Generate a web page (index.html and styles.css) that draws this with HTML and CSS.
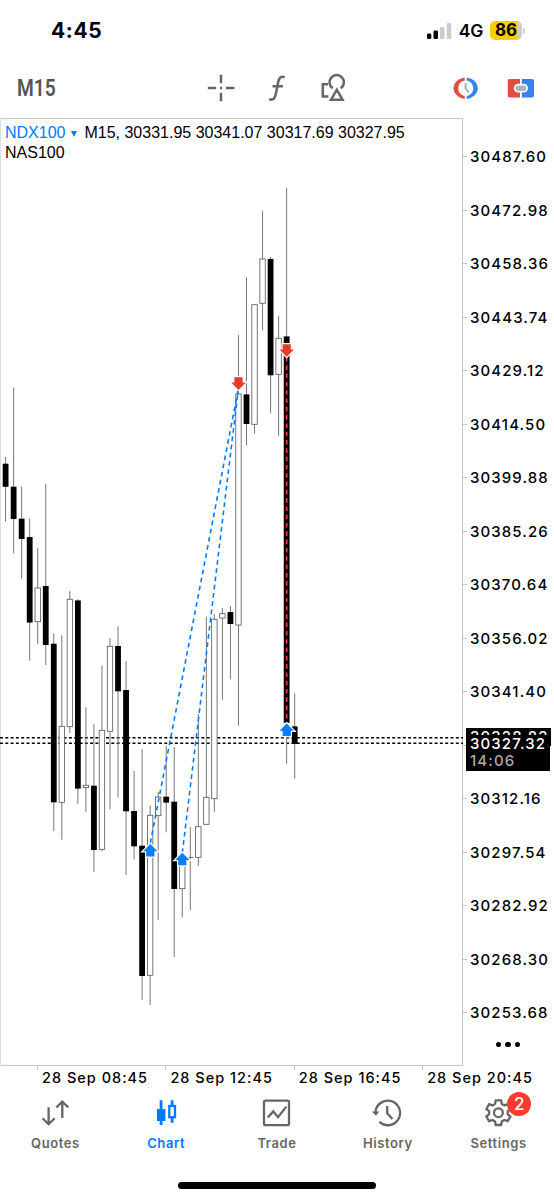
FILE: index.html
```html
<!DOCTYPE html>
<html lang="en">
	<head>
		<meta charset="UTF-8" />
		<meta name="viewport" content="width=device-width, initial-scale=1.0" />
		<title>NDX100 M15</title>
		<link rel="stylesheet" href="styles.css">
	</head>
	<body>
		<div class="app">
			<header class="status-bar">
				<span class="clock">4:45</span>
				<div class="status-icons">
					<svg class="signal" width="25" height="18" viewBox="0 0 25 18">
						<rect x="0" y="11.5" width="4.3" height="5.5" rx="1.3" />
						<rect x="6.5" y="8.5" width="4.5" height="8.5" rx="1.3" />
						<rect class="off" x="13" y="5" width="4.5" height="12" rx="1.3" />
						<rect class="off" x="19.7" y="1" width="4.5" height="16" rx="1.3" />
					</svg>
					<span class="network">4G</span>
					<span class="battery">86</span>
					<span class="battery-cap"></span>
				</div>
			</header>

			<nav class="toolbar">
				<span class="timeframe">M15</span>
				<div class="tools">
					<svg width="30" height="30" viewBox="0 0 30 30">
						<path d="M1.8 15h8.4M20 15h8.4M15 1.8v8.4M15 19.8v8.4M13.9 15h2.2" />
					</svg>
					<svg width="30" height="30" viewBox="0 0 30 30">
						<path d="M22.6 4.2C18.6 2.8 17 5 16.2 9L13.9 20.5C13 25 11.6 27.6 7.2 26.3M10.5 13.2h10.4" />
					</svg>
					<svg width="30" height="30" viewBox="0 0 30 30">
						<path d="M14.7 15.3A7.2 7.2 0 1 1 22.7 15.3M18.8 16.8L13 26.7H24.6ZM10 11.3H4.8V23.4H10.4" />
					</svg>
				</div>
				<div class="trade-tools">
					<svg width="30" height="30" viewBox="0 0 30 30">
						<path class="red" d="M13.7 4.4A13 10.9 0 0 0 13.7 26V23A8.3 8 0 0 1 13.7 7.4Z" />
						<path class="blue" d="M15.7 4.4A13 10.9 0 0 1 15.7 26V23A8.3 8 0 0 0 15.7 7.4Z" />
						<path class="hands" d="M14.6 10V15.7L18 19.6" />
					</svg>
					<svg width="30" height="30" viewBox="0 0 30 30">
						<path class="red" d="M3.7 6H14V24.5H3.7A2 2 0 0 1 1.7 22.5V8A2 2 0 0 1 3.7 6Z" />
						<path class="blue" d="M15.8 6H26A2 2 0 0 1 28 8V22.5A2 2 0 0 1 26 24.5H15.8Z" />
						<rect class="pill" x="8.6" y="11.6" width="12.6" height="7.2" rx="3.6" />
					</svg>
				</div>
			</nav>

			<main class="chart">
				<div class="plot">
					<svg class="candles" id="candles" width="463" height="948" viewBox="0 118 463 948"></svg>
					<div class="quote-info">
						<p><span class="symbol">NDX100 <i class="caret"></i></span> <span class="ohlc">M15, 30331.95 30341.07 30317.69 30327.95</span></p>
						<p>NAS100</p>
					</div>
				</div>
				<div class="price-axis">
					<span>30487.60</span>
					<span>30472.98</span>
					<span>30458.36</span>
					<span>30443.74</span>
					<span>30429.12</span>
					<span>30414.50</span>
					<span>30399.88</span>
					<span>30385.26</span>
					<span>30370.64</span>
					<span>30356.02</span>
					<span>30341.40</span>
					<span></span>
					<span>30312.16</span>
					<span>30297.54</span>
					<span>30282.92</span>
					<span>30268.30</span>
					<span>30253.68</span>
					<div class="price-tag ask">30328.82</div>
					<div class="price-tag bid">30327.32<small>14:06</small></div>
					<div class="more"><i></i><i></i><i></i></div>
				</div>
			</main>

			<div class="time-axis">
				<span>28 Sep 08:45</span>
				<span>28 Sep 12:45</span>
				<span>28 Sep 16:45</span>
				<span>28 Sep 20:45</span>
			</div>

			<nav class="tab-bar">
				<a class="tab">
					<svg width="30" height="30" viewBox="0 0 30 30">
						<path d="M8.6 9.3V26M2.6 20.3L8.6 26.2L14.6 20.3M22.3 20V3.6M16.3 9.5L22.3 3.6L28.3 9.5" />
					</svg>
					Quotes
				</a>
				<a class="tab active">
					<svg width="30" height="30" viewBox="0 0 30 30">
						<path d="M10.1 2.3V27M21.1 2.3V7M21.1 20V24.7" stroke-width="2.8" />
						<rect class="solid" x="6" y="11" width="8.4" height="12" />
						<rect x="18.3" y="8" width="5.7" height="11.2" />
					</svg>
					Chart
				</a>
				<a class="tab">
					<svg width="30" height="30" viewBox="0 0 30 30">
						<rect x="2" y="2.6" width="25" height="24.6" rx="1.5" />
						<path d="M5.8 19.6L11.3 13.4L16 19.2L24.3 8.6" />
					</svg>
					Trade
				</a>
				<a class="tab">
					<svg width="30" height="30" viewBox="0 0 30 30">
						<path d="M2.5 15.5A12.3 12.3 0 1 1 6.4 23.9M14.2 8V15.4L19.4 21" />
						<path class="solid" d="M-1.2 13.5H6.2L3 17.7Z" />
					</svg>
					History
				</a>
				<a class="tab">
					<svg width="30" height="30" viewBox="-14.4 -14.7 30 30">
						<path d="M-3.4 -8.8L-2.7 -12.3H2.7L3.4 -8.8L5.9 -7.3L9.3 -8.5L12 -3.8L9.3 -1.5V1.5L12 3.8L9.3 8.5L5.9 7.3L3.4 8.8L2.7 12.3H-2.7L-3.4 8.8L-5.9 7.3L-9.3 8.5L-12 3.8L-9.3 1.5V-1.5L-12 -3.8L-9.3 -8.5L-5.9 -7.3Z" />
						<circle cx="0" cy="0" r="4.4" />
					</svg>
					Settings
					<b class="badge">2</b>
				</a>
			</nav>
			<div class="home-indicator"></div>
		</div>

		<script>
			// [high, body top, body bottom, low, 1 = bearish]
			const candles = [
				[457, 464, 486.5, 521.7, 1],
				[387.5, 487, 518.7, 553.3, 1],
				[486.7, 519, 538.7, 578.7, 1],
				[518.3, 537.3, 622.3, 660.7, 1],
				[548, 588, 621.7, 644.3, 0],
				[483.7, 586.3, 644.7, 665, 1],
				[633.3, 644, 802, 831.3, 1],
				[635.3, 726.3, 802.3, 839.7, 0],
				[591, 599.3, 726.7, 733, 0],
				[599.3, 600.7, 788.3, 804, 1],
				[707.3, 785.3, 787.7, 812, 0],
				[724, 786, 849.7, 872, 1],
				[665.7, 730.3, 849.3, 851.3, 0],
				[638, 646.3, 731.3, 809.3, 0],
				[626.3, 646.3, 691, 797.3, 1],
				[661, 690.3, 811, 875, 1],
				[771, 811.3, 846, 859.3, 1],
				[749, 846, 975.7, 1000, 1],
				[805.7, 815.3, 975.3, 1005, 0],
				[792, 797, 815.7, 920.3, 0],
				[745.7, 797, 802.3, 832.3, 1],
				[747, 802, 888.7, 957, 1],
				[850, 858, 888.7, 917.3, 0],
				[827, 857.3, 857.4, 910, 0],
				[714, 826.7, 857.3, 865.7, 0],
				[616.7, 797.3, 824.3, 824.3, 0],
				[614.3, 619.3, 798.7, 812, 0],
				[608, 613.7, 618, 699.7, 0],
				[606, 612.3, 623.7, 679.3, 1],
				[335, 394, 625, 725.7, 0],
				[277.3, 394.7, 423.7, 445.3, 1],
				[304.7, 304.7, 424.3, 433.7, 0],
				[210.7, 259, 303.3, 330.3, 0],
				[257, 259.3, 375, 413.3, 1],
				[315.7, 338.3, 374.3, 435.7, 0],
				[188, 336.7, 722.5, 763.7, 1],
				[693.3, 726.7, 743.7, 778.7, 1],
			];

			// [x1, y1, x2, y2, class]
			const trades = [
				[150.3, 843, 238.5, 388, "buy"],
				[182.3, 853, 238.5, 388, "buy"],
				[286.7, 357, 286.7, 724, "sell"],
			];

			// [x, y, class]
			const arrows = [
				[150.3, 850.5, "buy"],
				[182.3, 859.3, "buy"],
				[286.7, 730, "buy"],
				[238.5, 383.3, "sell"],
				[286.7, 350.2, "sell"],
			];

			let out = "";
			for (const y of [737.7, 743.3]) {
				out += `<line class="price-line" x1="0" y1="${y}" x2="463" y2="${y}" />`;
			}

			candles.forEach(([high, top, bottom, low, bear], i) => {
				const x = 5.6 + i * 8.03;
				out += `<line class="wick" x1="${x}" y1="${high}" x2="${x}" y2="${low}" />`;
				if (bear) {
					out += `<rect x="${x - 2.9}" y="${top - 0.3}" width="5.8" height="${bottom - top + 0.6}" />`;
				} else {
					out += `<rect class="bull" x="${x - 2.7}" y="${top}" width="5.4" height="${bottom - top}" />`;
				}
			});

			for (const [x1, y1, x2, y2, cls] of trades) {
				out += `<line class="trade-line ${cls}" x1="${x1}" y1="${y1}" x2="${x2}" y2="${y2}" />`;
			}

			// white halo first, the coloured arrow over it
			for (const [x, y, cls] of arrows) {
				const turn = cls === "sell" ? " rotate(180)" : "";
				const d = "M0 -6.6L7.2 0.8H4.1V6H-4.1V0.8H-7.2Z";
				out += `<g transform="translate(${x} ${y})${turn}"><path class="halo" d="${d}" /><path class="arrow ${cls}" d="${d}" /></g>`;
			}

			document.getElementById("candles").innerHTML = out;
		</script>
	</body>
</html>
```
FILE: styles.css
```css
:root {
	--blue: #007aff;
	--red: #ff3b30;
	--gray: #666;
	--line: #c6c6c6;
}

* {
	margin: 0;
	padding: 0;
	box-sizing: border-box;
}

body {
	font-family: Inter, sans-serif;
	background: #fff;
	color: #000;
	overflow: hidden;
}

.app {
	display: flex;
	flex-direction: column;
	width: 554px;
	height: 1199px;
}

/* Status bar */
.status-bar {
	display: flex;
	justify-content: space-between;
	align-items: center;
	height: 60px;
	padding: 1px 29px 0 51px;
}

.clock {
	font-size: 21px;
	font-weight: 700;
	letter-spacing: 0.6px;
}

.status-icons {
	display: flex;
	align-items: center;
}

.signal .off {
	fill: #ccc;
}

.network {
	margin-left: 7px;
	font-size: 17.5px;
	font-weight: 600;
	letter-spacing: -0.3px;
}

.battery {
	width: 32px;
	margin-left: 7px;
	border-radius: 5px;
	background: linear-gradient(to right, #fc0 27px, #ccc 27px);
	font-size: 17px;
	font-weight: 700;
	line-height: 19px;
	text-align: center;
}

.battery-cap {
	width: 2px;
	height: 6px;
	margin-left: 1px;
	border-radius: 0 2px 2px 0;
	background: #ccc;
}

/* Toolbar */
.toolbar {
	display: flex;
	align-items: center;
	height: 58px;
	padding: 0 19px 2px 17px;
}

.timeframe {
	width: 189px;
	color: #555;
	font-family: Roboto, sans-serif;
	font-size: 24px;
	font-weight: 600;
	transform: scaleX(0.8);
	transform-origin: left;
}

.tools,
.trade-tools {
	display: flex;
	gap: 26px;
}

.tools svg {
	fill: none;
	stroke: var(--gray);
	stroke-width: 2.5;
}

.trade-tools {
	gap: 25px;
	margin-left: auto;
	margin-right: -1px;
}

.trade-tools .red {
	fill: #dc5044;
}

.trade-tools .blue {
	fill: #3484f0;
}

.hands {
	fill: none;
	stroke: #a9b8bd;
	stroke-width: 2.2;
}

.pill {
	fill: #a9b8bd;
	stroke: #fff;
	stroke-width: 1.6;
}

/* Chart */
.chart {
	display: flex;
	height: 948px;
}

.plot {
	position: relative;
	width: 463px;
	border: 1px solid var(--line);
	border-left-color: #ddd;
}

.candles {
	display: block;
	margin: -1px;
}

.quote-info {
	position: absolute;
	top: 4px;
	left: 4px;
	font: 16px/20px "Liberation Sans", sans-serif;
	white-space: nowrap;
}

.symbol {
	display: inline-block;
	width: 75px;
	color: var(--blue);
}

.caret {
	display: inline-block;
	margin: 0 0 1px 1px;
	border: 3px solid transparent;
	border-top: 6px solid var(--blue);
	border-bottom: 0;
}

.price-line {
	stroke: #000;
	stroke-width: 1.4;
	stroke-dasharray: 3 2.3;
}

.wick {
	stroke: #777;
	stroke-width: 1;
}

.bull {
	fill: #fff;
	stroke: #555;
	stroke-width: 0.8;
}

.trade-line {
	stroke-width: 1.6;
	stroke-dasharray: 4.6 3.7;
}

.trade-line.buy {
	stroke: var(--blue);
}

.trade-line.sell {
	stroke: #e8453a;
}

.halo {
	fill: #fff;
	stroke: #fff;
	stroke-width: 2.4;
}

.arrow.buy {
	fill: #067dfc;
}

.arrow.sell {
	fill: #e83a2b;
}

/* Axes */
.price-axis {
	position: relative;
	width: 91px;
	padding-top: 12px;
	font-size: 15px;
	font-weight: 500;
	letter-spacing: 1.1px;
}

.price-axis span {
	display: flex;
	align-items: center;
	height: 53.5px;
}

.price-axis span::before {
	content: "";
	width: 4px;
	height: 1px;
	margin-right: 3px;
	background: var(--line);
}

.price-tag {
	position: absolute;
	left: 3px;
	padding-left: 4px;
	background: #000;
	color: #fff;
	line-height: 17px;
}

.price-tag.ask {
	top: 610px;
	width: 85px;
	height: 18px;
}

.price-tag.bid {
	top: 617px;
	width: 84px;
	height: 36px;
}

.price-tag small {
	display: block;
	color: #aaa;
	font-size: 15px;
	line-height: 18px;
}

.more {
	position: absolute;
	top: 924px;
	left: 33px;
	display: flex;
	gap: 4px;
}

.more i {
	width: 5.4px;
	height: 5.4px;
	border-radius: 50%;
	background: #000;
}

.time-axis {
	display: flex;
	height: 25px;
	padding-left: 37px;
	font-size: 14.5px;
	font-weight: 500;
	letter-spacing: 1px;
	white-space: nowrap;
}

.time-axis span {
	flex: 0 0 128.4px;
	display: flex;
	line-height: 23px;
}

.time-axis span::before {
	content: "";
	width: 1px;
	height: 4px;
	margin-right: 4px;
	background: var(--line);
}

/* Tab bar */
.tab-bar {
	display: grid;
	grid-template-columns: repeat(5, 1fr);
	height: 75px;
	padding-top: 7px;
}

.tab {
	position: relative;
	display: flex;
	flex-direction: column;
	align-items: center;
	gap: 7px;
	color: var(--gray);
	font-size: 13px;
	font-weight: 600;
	letter-spacing: 0.6px;
	line-height: 17px;
}

.tab.active {
	color: var(--blue);
}

.tab svg {
	overflow: visible;
	fill: none;
	stroke: currentColor;
	stroke-width: 2.3;
}

.tab .solid {
	fill: currentColor;
	stroke: none;
}

.badge {
	position: absolute;
	top: -6px;
	left: 64px;
	width: 24px;
	height: 24px;
	border-radius: 50%;
	background: var(--red);
	color: #fff;
	font-size: 17px;
	font-weight: 500;
	letter-spacing: 0;
	line-height: 24px;
	text-align: center;
}

.home-indicator {
	width: 198px;
	height: 7px;
	margin: 16px auto 0;
	border-radius: 4px;
	background: #000;
}
```
